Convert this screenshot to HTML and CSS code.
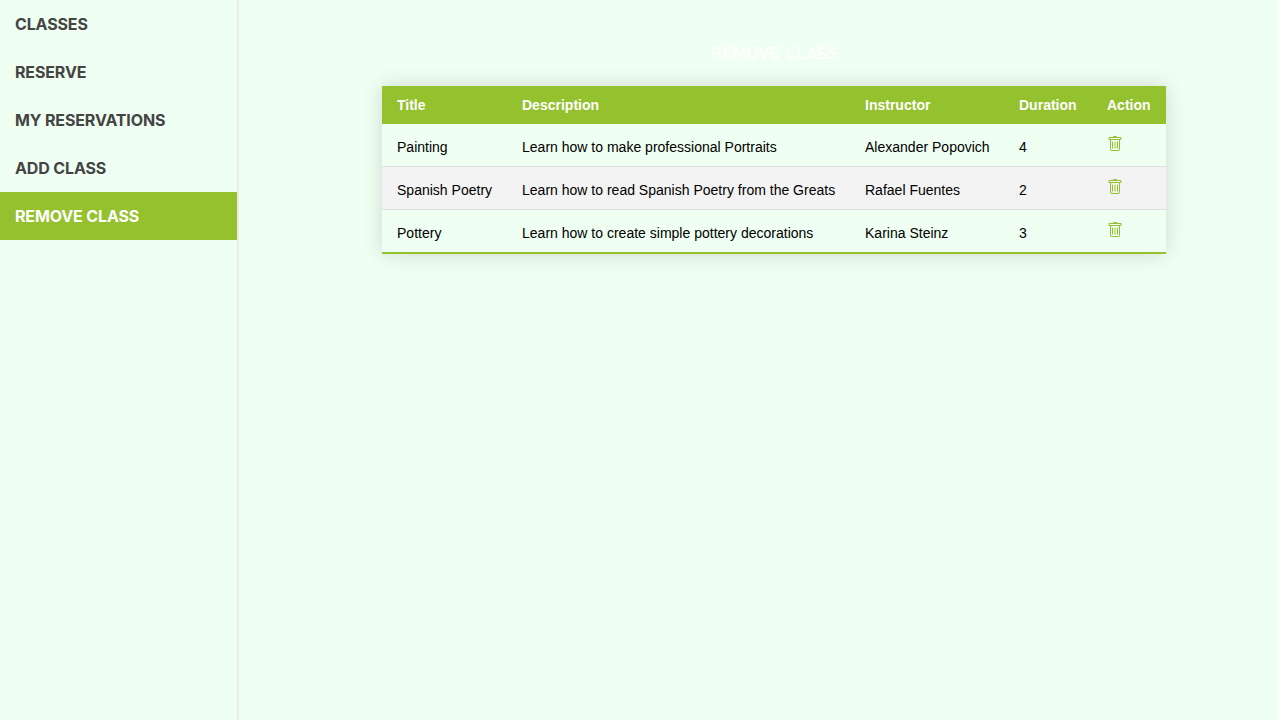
FILE: index.html
```html
<!DOCTYPE html>
<html lang="en">
<head>
<meta charset="utf-8">
<title>Remove Class</title>
<link rel="stylesheet" href="styles.css">
</head>
<body>
<svg class="sprite" aria-hidden="true">
<symbol id="trash" viewBox="0 0 16 16"><path d="M5.5 5.5A.5.5 0 0 1 6 6v6a.5.5 0 0 1-1 0V6a.5.5 0 0 1 .5-.5m2.500 0a.5.5 0 0 1 .5.5v6a.5.5 0 0 1-1 0V6a.5.5 0 0 1 .5-.5m3 .5a.5.5 0 0 0-1 0v6a.5.5 0 0 0 1 0z"/><path fill-rule="evenodd" d="M14.500 3a1 1 0 0 1-1 1H13v9a2 2 0 0 1-2 2H5a2 2 0 0 1-2-2V4h-.5a1 1 0 0 1-1-1V2a1 1 0 0 1 1-1H6a1 1 0 0 1 1-1h2a1 1 0 0 1 1 1h3.500a1 1 0 0 1 1 1zM4.118 4 4 4.059V13a1 1 0 0 0 1 1h6a1 1 0 0 0 1-1V4.059L11.882 4zM2.500 3h11V2h-11z"/></symbol>
</svg>
<div class="layout">
<nav class="sidebar">
<a class="link">CLASSES</a>
<a class="link">RESERVE</a>
<a class="link">MY RESERVATIONS</a>
<a class="link">ADD CLASS</a>
<a class="link active">REMOVE CLASS</a>
</nav>
<main class="content">
<h1 class="heading">REMOVE CLASS</h1>
<table class="classes">
<colgroup><col class="c-title"><col class="c-desc"><col class="c-inst"><col class="c-dur"><col class="c-act"></colgroup>
<thead><tr><th>Title</th><th>Description</th><th>Instructor</th><th>Duration</th><th>Action</th></tr></thead>
<tbody>
<tr><td>Painting</td><td>Learn how to make professional Portraits</td><td>Alexander Popovich</td><td>4</td><td><svg class="trash"><use href="#trash"/></svg></td></tr>
<tr><td>Spanish Poetry</td><td>Learn how to read Spanish Poetry from the Greats</td><td>Rafael Fuentes</td><td>2</td><td><svg class="trash"><use href="#trash"/></svg></td></tr>
<tr><td>Pottery</td><td>Learn how to create simple pottery decorations</td><td>Karina Steinz</td><td>3</td><td><svg class="trash"><use href="#trash"/></svg></td></tr>
</tbody>
</table>
</main>
</div>
</body>
</html>
```
FILE: styles.css
```css
* { box-sizing: border-box; }
body { margin: 0; background: #effff2; font-family: Inter, sans-serif; }
.sprite { display: none; }
.layout { display: flex; height: 720px; }
.sidebar { width: 239px; flex: none; border-right: 2px solid #ebebeb; }
.link { display: block; height: 48px; padding-left: 15px; line-height: 48px; font-size: 16px; font-weight: 700; letter-spacing: -.14px; color: #444; }
.link.active { background: #94c12e; color: #fff; }
.content { flex: 1; display: flex; flex-direction: column; align-items: center; padding: 44px 0 0 31px; }
.heading { margin: 0 0 23px; font-family: "DejaVu Sans", Verdana, sans-serif; font-size: 16px; line-height: 19px; font-weight: 400; letter-spacing: .1px; -webkit-text-stroke: .4px #fff; color: #fff; }
.classes { width: 784px; table-layout: fixed; border-collapse: separate; border-spacing: 0; font-family: "Liberation Sans", Arial, sans-serif; font-size: 14.02px; box-shadow: 0 0 20px rgba(0,0,0,.15); }
.c-title { width: 125px; }
.c-desc { width: 343px; }
.c-inst { width: 154px; }
.c-dur { width: 88px; }
.c-act { width: 74px; }
.classes th { height: 38px; padding: 0 0 0 15px; text-align: left; background: #94c12e; color: #fff; }
.classes td { height: 43px; padding: 4px 0 0 15px; white-space: nowrap; border-bottom: 1px solid #ddd; }
.classes tbody tr:nth-child(2) td { background: #f3f3f3; }
.classes tbody tr:last-child td { height: 44px; border-bottom: 2px solid #94c12e; }
.trash { display: block; width: 16px; height: 16px; margin-top: -6px; fill: #94c12e; }
```
